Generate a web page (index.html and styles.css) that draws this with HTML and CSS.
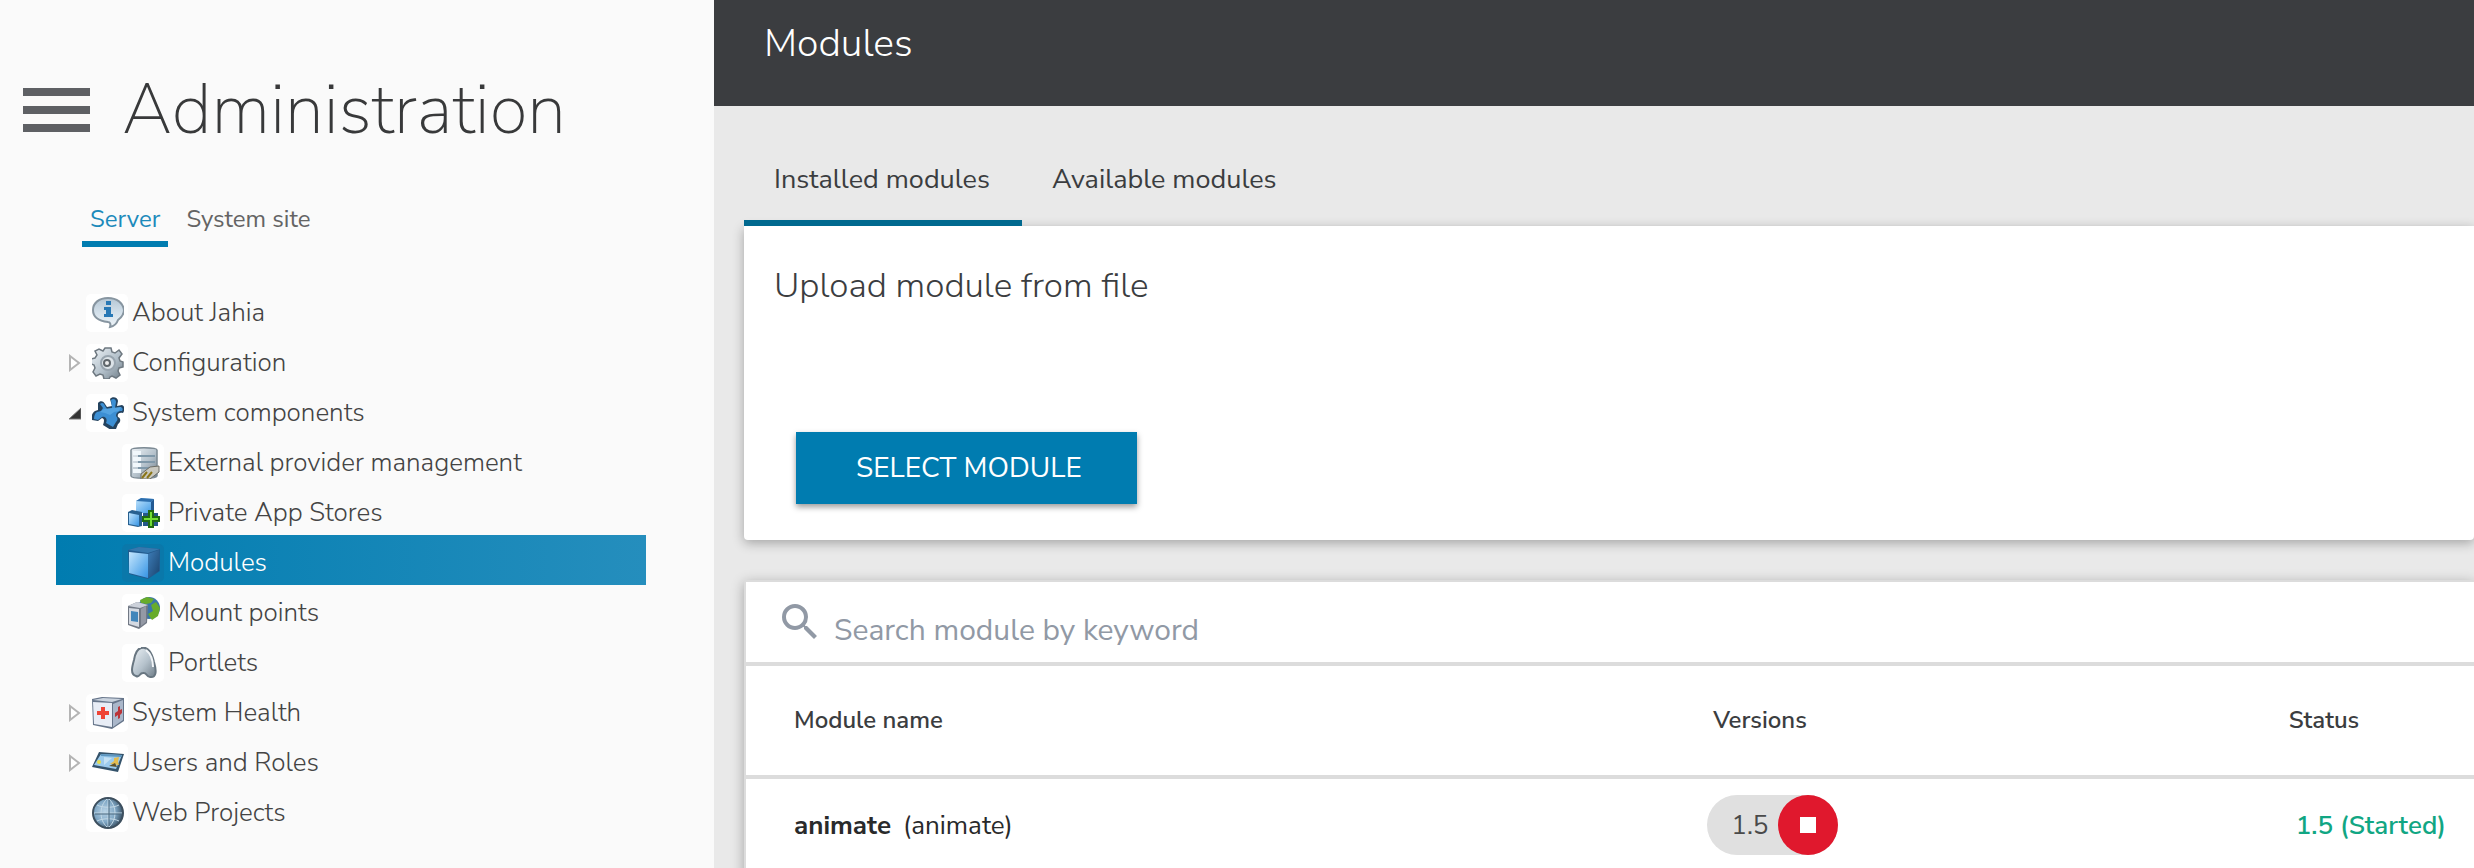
FILE: index.html
```html
<!DOCTYPE html>
<html lang="en">
<head>
<meta charset="utf-8">
<title>Administration - Modules</title>
<link rel="stylesheet" href="styles.css">
</head>
<body>
<svg class="defs" aria-hidden="true">
  <defs>
    <linearGradient id="steel" x1="0" y1="0" x2="1" y2="1"><stop offset="0" stop-color="#eef3f7"/><stop offset=".55" stop-color="#b4c1cb"/><stop offset="1" stop-color="#6f7d88"/></linearGradient>
    <linearGradient id="bubble" x1="0" y1="0" x2="0" y2="1"><stop offset="0" stop-color="#b5c6d4"/><stop offset=".5" stop-color="#d3e0ea"/><stop offset="1" stop-color="#eef4f8"/></linearGradient>
    <linearGradient id="blue" x1="0" y1="0" x2="1" y2="1"><stop offset="0" stop-color="#c4e6fd"/><stop offset="1" stop-color="#3694e4"/></linearGradient>
    <linearGradient id="deep" x1="0" y1="0" x2="1" y2="1"><stop offset="0" stop-color="#3d7db8"/><stop offset="1" stop-color="#1b4570"/></linearGradient>
    <radialGradient id="globe" cx=".4" cy=".45" r=".6"><stop offset="0" stop-color="#b9d3e6"/><stop offset=".6" stop-color="#7ea6c4"/><stop offset="1" stop-color="#3b5367"/></radialGradient>
  </defs>
</svg>
<div class="app">
  <aside class="sidebar">
    <header class="brand">
      <button class="burger" type="button" aria-label="Menu"><span></span><span></span><span></span></button>
      <h1>Administration</h1>
    </header>
    <nav class="scopes" aria-label="Scope">
      <a class="scope active" href="#server">Server</a>
      <a class="scope" href="#site">System site</a>
    </nav>
    <ul class="tree">
      <li><a class="node" href="#about"><span class="toggle"></span><span class="icon"><svg viewBox="0 0 32 32"><path d="M16 1C7 1 1 6 1 13s6 11 15 12c2 0 3 2 2 5 5-1 7-4 8-7 4-3 6-6 6-10C31 6 25 1 16 1Z" fill="url(#bubble)" stroke="#8795a0" stroke-width="2"/><path d="M14 4h5v4h-5zM12 10h7v7h2v3h-9v-3h2v-4h-2z" fill="#2878b5"/></svg></span>About Jahia</a></li>
      <li><a class="node" href="#configuration"><span class="toggle"><svg viewBox="0 0 12 18"><path d="M1 2l9 7-9 7z" fill="#fff" stroke="#b4b4b4" stroke-width="2"/></svg></span><span class="icon"><svg viewBox="0 0 32 32"><path d="M13 1h6l1 4 3 1 4-3 3 4-3 4 1 3 3 1v5l-4 1-1 3 2 4-4 3-4-2-2 1-1 2h-5l-1-4-3-1-4 2-3-4 2-4-1-3-3-1v-5l4-1 2-3-2-4 4-2 4 2z" fill="url(#steel)" stroke="#6e7880" stroke-width="1.5"/><circle cx="16" cy="16" r="7" fill="#dce3e8" stroke="#98a4ae" stroke-width="2"/><circle cx="15" cy="16" r="3" fill="#eee" stroke="#60676c" stroke-width="2"/></svg></span>Configuration</a></li>
      <li><a class="node" href="#components"><span class="toggle"><svg viewBox="0 0 12 18"><path d="M0 15L12 4v11z" fill="#333" stroke="#777"/></svg></span><span class="icon"><svg viewBox="0 0 32 32"><path d="M18 2c2-3 8-2 8 2l-1 5 5-1c3 1 3 5 1 8-4-1-6 1-5 4 3 1 3 5 0 7l-2 5-5 1-8-5c1-3 2-6-1-7l-4 3-6-1c-1-4 0-7 3-9l3-1V6c2-3 6-2 7 1l2 3 5-1z" fill="#24435f"/><path d="M19 3c2-2 5-1 5 2l-1 6 6-1c2 1 2 3 1 4-4 0-6 2-6 5 2 2 2 4 0 6l-3 5-7-4c2-4-1-7-4-6l-4 3-4-1c0-3 1-6 3-7l4-1 2-3-3-4c2-2 4-1 5 2l2 3 5-1z" fill="#3c8fd4"/><path d="M8 15l4-3 7-1 10-1-2 4-5 1-4 3-5-2z" fill="#64b0ea" opacity=".6"/></svg></span>System components</a>
        <ul class="subtree">
          <li><a class="node" href="#providers"><span class="icon"><svg viewBox="0 0 32 32"><path d="M3 3c0-3 26-3 26 0v26c0 3-26 3-26 0z" fill="url(#steel)" stroke="#7b8993" stroke-width="1.5"/><path d="M10 9h17M10 15h17M10 21h11" stroke="#7f98a9" stroke-width="2"/><path d="M5 6h8M5 12h8M5 18h8M5 24h8" stroke="#f1f8fc" stroke-width="4"/><path d="M13 27l9-7 9-1v6l-9 7h-9z" fill="#c9c8bf" stroke="#6d6d65"/><path d="M14 31l5-6M19 31l5-6" stroke="#8b7618" stroke-width="2"/></svg></span>External provider management</a></li>
          <li><a class="node" href="#stores"><span class="icon"><svg viewBox="0 0 32 32"><path d="M8 4l5-3 13 1v14H8z" fill="url(#blue)"/><path d="M8 4l5-3 13 1-3 3z" fill="#2e6fae"/><path d="M23 5l3-3v13l-3 3z" fill="#235a92"/><path d="M15 16h15v13H15z" fill="#25588a"/><path d="M0 15l4-2 10 2v14l-4 1-10-2z" fill="#28608f"/><path d="M1 16l10 2v11L1 27z" fill="url(#blue)"/><path d="M20 13h6v6h6v6h-6v6h-6v-6h-6v-6h6z" fill="#206b13"/><path d="M22 15h2v6h6v2h-6v6h-2v-6h-6v-2h6z" fill="#72df35"/></svg></span>Private App Stores</a></li>
          <li><a class="node selected" href="#modules" aria-current="page"><span class="icon"><svg viewBox="0 0 32 32"><path d="M0 3l11-3 21 2v22l-12 8L1 27z" fill="#235b8e"/><path d="M0 3l11-3 21 2-12 4z" fill="#3678ae"/><path d="M1 5l19 2v24L1 26z" fill="url(#blue)"/><path d="M20 7l11-4v21l-11 7z" fill="url(#deep)"/></svg></span>Modules</a></li>
          <li><a class="node" href="#mounts"><span class="icon"><svg viewBox="0 0 32 32"><circle cx="21" cy="11" r="11" fill="#3b76a8"/><path d="M12 3l7-3 7 2-3 4-5 1-5-1zM23 8l5-3 4 6-2 8-6 4-4-6 5-3z" fill="#67ac2b"/><path d="M0 9l9-4 11 3-1 18-8 6L0 28z" fill="#727985"/><path d="M0 9l9-4 11 3-8 3z" fill="#ccd1da"/><path d="M1 11l10 1v18L1 27z" fill="#d5dae2"/><path d="M3 14l7 1v10l-7-1z" fill="#4186bb"/><path d="M13 12l5-3v16l-5 4z" fill="#9499a5"/></svg></span>Mount points</a></li>
          <li><a class="node" href="#portlets"><span class="icon"><svg viewBox="0 0 32 32"><path d="M13 1c7-2 11 5 13 14 3 10 2 16-4 15-4 0-3-5-7-4-4 0-3 5-7 3-6-2-4-9-2-16C7 7 9 2 13 1Z" fill="url(#steel)" stroke="#687681" stroke-width="2"/><path d="M18 3c5 4 7 10 7 17" fill="none" stroke="#f2f5f8" stroke-width="2"/></svg></span>Portlets</a></li>
        </ul>
      </li>
      <li><a class="node" href="#health"><span class="toggle"><svg viewBox="0 0 12 18"><path d="M1 2l9 7-9 7z" fill="#fff" stroke="#b4b4b4" stroke-width="2"/></svg></span><span class="icon"><svg viewBox="0 0 32 32"><path d="M0 2l10-2 22 1v23l-12 8L1 28z" fill="#66758a"/><path d="M1 3l10-2 19 1-10 3z" fill="#cbd4df"/><path d="M1 5l19 1v24L2 27z" fill="#e8edf6"/><path d="M21 7l10-4v20l-10 7z" fill="#aab7ca"/><path d="M9 10h4v4h4v4h-4v4H9v-4H5v-4h4z" fill="#ef4436"/><path d="M26 10l2-1v4l2-1v4l-2 2v3l-2 1v-4l-3 2v-4l3-2z" fill="#bb3438"/></svg></span>System Health</a></li>
      <li><a class="node" href="#users"><span class="toggle"><svg viewBox="0 0 12 18"><path d="M1 2l9 7-9 7z" fill="#fff" stroke="#b4b4b4" stroke-width="2"/></svg></span><span class="icon"><svg viewBox="0 0 32 32"><path d="M7 5l25 2-6 18-26-5z" fill="#34536b"/><path d="M9 7l21 1-6 14-22-4z" fill="#9ccbed"/><path d="M9 7l21 1-1 2-20-1z" fill="#5d96bf"/><path d="M12 10l8 1-8 7" fill="#c4e1f3"/><circle cx="7" cy="15" r="2" fill="#e7dc4b"/><path d="M22 11l5-1-1 5 1 3-9-1 4-3z" fill="#e3bc50"/><path d="M17 19l6-3 2 4z" fill="#5e512b"/></svg></span>Users and Roles</a></li>
      <li><a class="node" href="#projects"><span class="toggle"></span><span class="icon"><svg viewBox="0 0 32 32"><circle cx="16" cy="16" r="15" fill="url(#globe)" stroke="#3d4f5e" stroke-width="2"/><path d="M16 2v28M2 16h28M5 8c6 3 16 3 22 0M5 24c6-3 16-3 22 0M15 2C7 9 7 23 15 30M17 2c8 7 8 21 0 28" fill="none" stroke="#c3d8e6" stroke-width="1"/><path d="M3 17h27M17 3v26" stroke="#4b687e"/></svg></span>Web Projects</a></li>
    </ul>
  </aside>
  <main class="main">
    <header class="topbar"><h2>Modules</h2></header>
    <div class="content">
      <nav class="tabs" aria-label="Module lists">
        <a class="tab active" href="#installed">Installed modules</a>
        <a class="tab" href="#available">Available modules</a>
      </nav>
      <section class="card upload">
        <h3>Upload module from file</h3>
        <button class="primary" type="button">SELECT MODULE</button>
      </section>
      <section class="card listing">
        <label class="search">
          <svg viewBox="3 3 18 18" aria-hidden="true"><path d="M15.5 14h-.79l-.28-.27A6.47 6.47 0 0 0 16 9.5 6.5 6.5 0 1 0 9.5 16c1.61 0 3.09-.59 4.23-1.57l.27.28v.79l5 4.99L20.49 19l-4.99-5zm-6 0C7.01 14 5 11.99 5 9.5S7.01 5 9.5 5 14 7.01 14 9.5 11.99 14 9.5 14z" fill="#9199a5"/></svg>
          <input type="search" placeholder="Search module by keyword" aria-label="Search module by keyword">
        </label>
        <table>
          <thead><tr><th class="name">Module name</th><th class="versions">Versions</th><th>Status</th></tr></thead>
          <tbody><tr>
            <td><strong>animate</strong><span class="id">(animate)</span></td>
            <td class="version"><span class="pill">1.5<button class="stop" type="button" aria-label="Stop version 1.5"><span></span></button></span></td>
            <td class="status">1.5 (Started)</td>
          </tr></tbody>
        </table>
      </section>
    </div>
  </main>
</div>
</body>
</html>
```
FILE: styles.css
```css
* { box-sizing: border-box; }
body {
  margin: 0;
  font-family: "Nunito Sans", Lato, "Open Sans", sans-serif;
  font-size: 26px;
  color: #3b3d40;
  background: #e9e9e9;
}
h1, h2, h3, ul { margin: 0; padding: 0; font-weight: 300; }
ul { list-style: none; }
a { color: inherit; text-decoration: none; }
button { border: 0; padding: 0; font: inherit; cursor: pointer; }
.defs { position: absolute; width: 0; height: 0; }
.app { display: flex; min-height: 100vh; overflow: hidden; }

.sidebar { flex: 0 0 714px; background: #fafafa; }
.brand { display: flex; align-items: center; gap: 32px; padding: 62px 0 0 23px; }
.brand h1 { font-size: 70px; font-weight: 200; line-height: 96px; color: #38393a; }
.burger { display: flex; flex-direction: column; gap: 10px; width: 67px; background: none; }
.burger span { height: 8px; background: #5e6064; }
.scopes { display: flex; gap: 10px; margin-top: 36px; padding-left: 82px; }
.scope { padding: 9px 8px 6px; border-bottom: 6px solid transparent; font-size: 24px; line-height: 32px; color: #646464; }
.scope.active { color: #1c8abb; border-color: #007cb0; }
.tree { margin-top: 38px; padding: 0 68px 0 56px; font-weight: 300; color: #444; }
.node { display: flex; align-items: center; height: 50px; padding-top: 6px; line-height: 44px; white-space: nowrap; }
.subtree .node { padding-left: 66px; }
.toggle { display: flex; width: 30px; padding-left: 13px; }
.toggle svg { width: 12px; height: 18px; }
.icon { display: flex; padding: 3px 4px 3px 6px; margin-right: 4px; border-radius: 5px; background: #fff; }
.icon svg { width: 32px; height: 32px; }
.node.selected { color: #fff; background: linear-gradient(90deg, #007cb0, #258ebd); }
.selected .icon { background: #0a78aa; }

.main { flex: 1; min-width: 0; }
.topbar { height: 106px; padding: 17px 50px; background: #3b3d40; color: #fff; }
.topbar h2 { font-size: 39px; line-height: 54px; }
.content { padding: 38px 0 0 30px; }
.tabs { display: flex; }
.tab { padding: 16px 32px 20px 30px; border-bottom: 6px solid transparent; font-size: 27px; line-height: 40px; }
.tab.active { border-color: #00698f; }
.card { background: #fff; box-shadow: 0 3px 12px rgba(0, 0, 0, .3); }
.upload { height: 314px; padding: 35px 30px; border-radius: 0 0 4px 4px; }
.upload h3 { font-size: 35px; line-height: 50px; }
.primary { margin: 121px 22px 0; padding: 0 55px 0 60px; font-size: 28px; line-height: 72px; color: #fff; background: #007cb0; box-shadow: 0 3px 6px rgba(0, 0, 0, .4); }
.listing { margin-top: 40px; border: 2px solid #dcdcdc; border-right: 0; min-height: 300px; }
.search { display: flex; height: 84px; padding: 0 36px; gap: 16px; border-bottom: 4px solid #dcdcdc; }
.search svg { width: 36px; height: 36px; margin-top: 22px; }
.search input { flex: 1; border: 0; padding: 16px 0 0; outline: 0; background: none; font: inherit; font-size: 30px; }
.search input::placeholder { color: #9199a5; opacity: 1; }
table { width: 100%; table-layout: fixed; border-collapse: separate; border-spacing: 0; }
th, td { padding: 0 0 0 48px; text-align: left; white-space: nowrap; }
th { height: 113px; padding-bottom: 2px; border-bottom: 4px solid #dcdcdc; font-size: 24px; font-weight: 600; }
td { height: 92px; color: #292a2b; }
.name { width: 53.2%; }
.versions { width: 33.3%; }
.id { margin-left: 12px; }
.version { padding-left: 42px; }
.pill { display: inline-flex; align-items: center; gap: 10px; padding-left: 24px; border-radius: 30px; background: #e0e0e0; color: #4a4a4a; vertical-align: middle; }
.stop { display: flex; align-items: center; justify-content: center; width: 60px; height: 60px; border-radius: 50%; background: #e0182d; }
.stop span { width: 16px; height: 16px; background: #fff; }
.status { padding-left: 55px; color: #11a683; font-weight: 600; }
```
